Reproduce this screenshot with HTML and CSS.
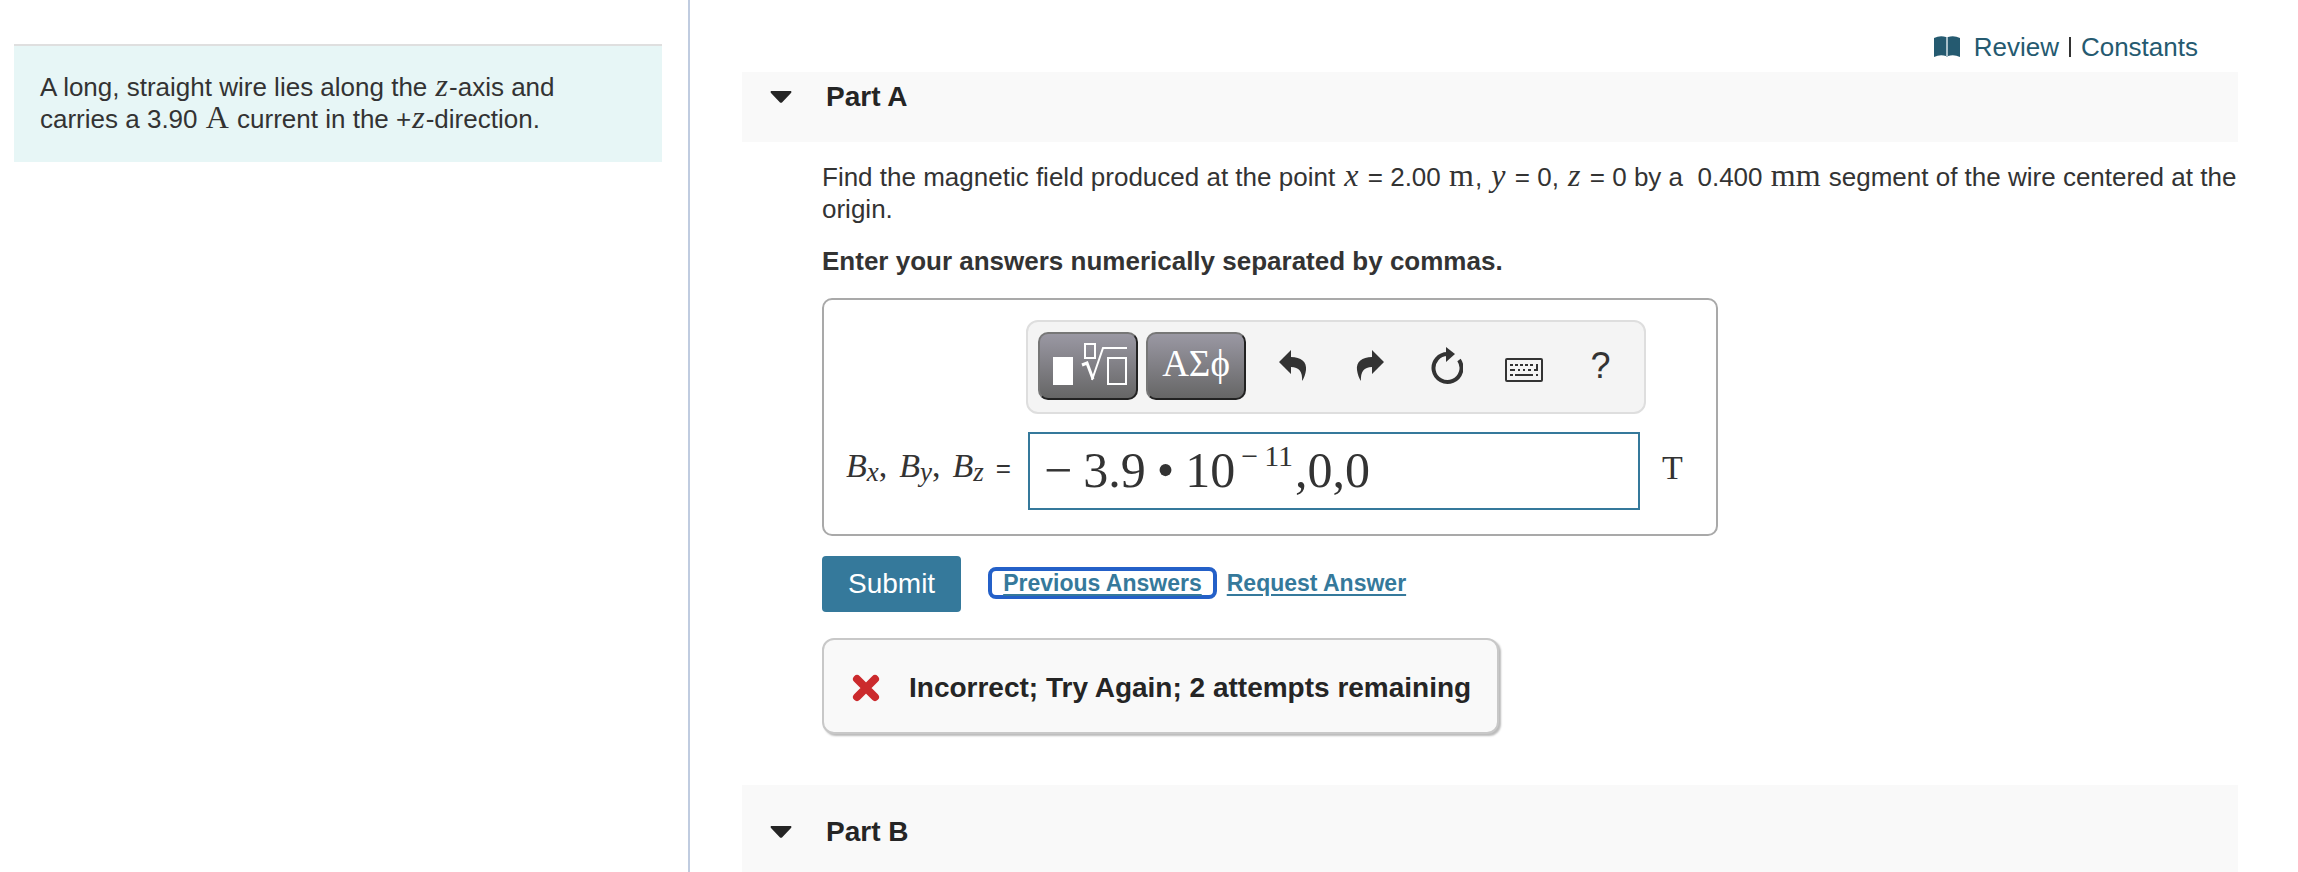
FILE: index.html
```html
<!DOCTYPE html>
<html lang="en">
<head>
    <meta charset="utf-8">
    <title>Magnetic Field of a Wire</title>
    <link rel="stylesheet" href="styles.css">
</head>
<body>
    <div class="page">
        <aside class="sidebar">
            <div class="problem-intro">
                A long, straight wire lies along the <i class="math">z</i>-axis and carries a 3.90 <span class="math">A</span> current in the +<i class="math">z</i>-direction.
            </div>
        </aside>

        <main class="content">
            <nav class="top-links">
                <svg class="book-icon" viewBox="0 0 26 22" aria-hidden="true">
                    <path d="M0 2Q6 -1 12 1V20Q6 18 0 21Z"/>
                    <path d="M14 1Q20 -1 26 2V21Q20 18 14 20Z"/>
                    <path class="spine" d="M12 1h2v20h-2z"/>
                </svg>
                <a href="#review">Review</a>
                <span class="bar"></span>
                <a href="#constants">Constants</a>
            </nav>

            <section>
                <h2 class="part-header">
                    <button class="part-toggle" aria-expanded="true">
                        <svg class="caret" viewBox="0 0 22 12" aria-hidden="true"><path d="M1 0H21Q22 1 21 2L12 11.500Q11 12 10 11.500L1 2Q0 1 1 0Z"/></svg>
                        Part A
                    </button>
                </h2>
                <div class="part-body">
                    <p>Find the magnetic field produced at the point <i class="math">x</i> = 2.00 <span class="math">m</span>, <i class="math">y</i> = 0, <i class="math">z</i> = 0 by a &nbsp;0.400 <span class="math">mm</span> segment of the wire centered at the origin.</p>
                    <p class="instructions">Enter your answers numerically separated by commas.</p>

                    <form class="answer-box">
                        <div class="toolbar">
                            <button type="button" class="tool-key" aria-label="Templates">
                                <svg width="80" height="44" viewBox="-4 0 80 44" aria-hidden="true">
                                    <path d="M1 15h20v28h-20z" fill="#fff"/>
                                    <path d="M33 2h10v14h-10zM56 16h18v26h-18z" fill="none" stroke="#fff" stroke-width="2"/>
                                    <path d="M30 23l5-2 6 16" fill="none" stroke="#fff" stroke-width="3"/>
                                    <path d="M40 38L51 6H75" fill="none" stroke="#fff" stroke-width="2"/>
                                </svg>
                            </button>
                            <button type="button" class="tool-key">ΑΣϕ</button>
                            <button type="button" class="tool" aria-label="Undo">
                                <svg width="28" height="32" viewBox="0 0 28 32" aria-hidden="true"><path d="M0 12L12 0V7C22 7 28 12 27 20Q26 27 23 31Q24 17 12 17V24Z"/></svg>
                            </button>
                            <button type="button" class="tool" aria-label="Redo">
                                <svg width="28" height="32" viewBox="0 0 28 32" aria-hidden="true"><path d="M28 12L16 0V7C6 7 0 12 1 20Q2 27 5 31Q4 17 16 17V24Z"/></svg>
                            </button>
                            <button type="button" class="tool" aria-label="Reset">
                                <svg width="32" height="38" viewBox="0 0 32 38" aria-hidden="true">
                                    <path d="M17 7A14 14 0 1 0 28 13" fill="none" stroke="#333" stroke-width="4"/>
                                    <path d="M15 0L24 7L15 15Z"/>
                                </svg>
                            </button>
                            <button type="button" class="tool tool-keyboard" aria-label="Keyboard shortcuts">
                                <svg width="38" height="24" viewBox="0 0 38 24" aria-hidden="true">
                                    <rect x="1" y="1" width="36" height="22" rx="1" fill="none" stroke="#333" stroke-width="2"/>
                                    <path d="M5 6h3v2h-3zM10 6h3v2h-3zM15 6h3v2h-3zM20 6h3v2h-3zM25 6h3v2h-3zM31 6h2v7h-4v-2h2zM5 11h5v2h-5zM13 11h2v2h-2zM18 11h2v2h-2zM23 11h3v2h-3zM5 16h3v2h-3zM10 16h18v2h-18zM31 16h2v2h-2z"/>
                                </svg>
                            </button>
                            <button type="button" class="tool" aria-label="Help">?</button>
                        </div>

                        <label class="answer-label" for="answer">
                            <span class="component"><i>B<sub>x</sub></i>,</span>
                            <span class="component"><i>B<sub>y</sub></i>,</span>
                            <span class="component"><i>B<sub>z</sub></i></span>
                            <span class="equals">=</span>
                        </label>
                        <div class="math-field">
                            <textarea id="answer" class="math-input"></textarea>
                            <span class="minus">−</span><span>3.9</span><span class="dot">•</span><span>10</span><sup><span class="exp-minus">−</span>11</sup><span>,0,0</span>
                        </div>
                        <span class="answer-unit">T</span>
                    </form>

                    <div class="actions">
                        <button class="submit">Submit</button>
                        <a class="action-link focused" href="#previous">Previous Answers</a>
                        <a class="action-link" href="#request">Request Answer</a>
                    </div>

                    <div class="feedback" role="status">
                        <svg class="cross" viewBox="0 0 28 28" aria-hidden="true"><path d="M5 5L23 23M23 5L5 23"/></svg>
                        Incorrect; Try Again; 2 attempts remaining
                    </div>
                </div>
            </section>

            <section>
                <h2 class="part-header part-b">
                    <button class="part-toggle" aria-expanded="true">
                        <svg class="caret" viewBox="0 0 22 12" aria-hidden="true"><path d="M1 0H21Q22 1 21 2L12 11.500Q11 12 10 11.500L1 2Q0 1 1 0Z"/></svg>
                        Part B
                    </button>
                </h2>
            </section>
        </main>
    </div>
</body>
</html>
```
FILE: styles.css
```css
* { box-sizing: border-box; }
body { margin: 0; font-family: "Liberation Sans", Arial, sans-serif; font-size: 26px; line-height: 32px; color: #333; background: #fff; }
button { font-family: inherit; color: inherit; border: none; background: none; padding: 0; cursor: pointer; }
p { margin: 0; }

.page { display: flex; min-height: 100vh; }
.sidebar { flex: 0 0 690px; padding: 44px 26px 0 14px; border-right: 2px solid #c0cce0; }
.problem-intro { padding: 25px 70px 27px 26px; border-top: 2px solid #dfdfdf; background: #e7f6f6; }
.content { flex: 1; min-width: 0; padding: 0 60px 0 52px; }

.math { padding: 0 1px; font-family: "Liberation Serif", serif; font-size: 32px; line-height: 24px; }

.top-links { display: flex; align-items: center; justify-content: flex-end; gap: 10px; height: 72px; padding: 22px 40px 0 0; line-height: 30px; }
.top-links a { color: #255a70; text-decoration: none; }
.book-icon { width: 26px; height: 22px; margin-right: 4px; fill: #255a70; }
.spine { fill: #a9c0ca; }
.bar { width: 2px; height: 20px; background: #333; }

.part-header { margin: 0; padding: 9px 28px 29px; background: #f9f9f9; }
.part-toggle { display: flex; align-items: center; gap: 34px; font-size: 28px; line-height: 32px; font-weight: bold; color: #252525; }
.caret { width: 22px; height: 12px; fill: #252525; }
.part-b { padding-top: 31px; }
.part-body { padding: 19px 0 51px 80px; }
.part-body i.math { padding: 0 2px; }
.instructions { margin-top: 20px; font-weight: bold; }

.answer-box { display: grid; grid-template-columns: 180px 1fr 54px; align-items: center; max-width: 896px; margin-top: 21px; padding: 20px 22px 24px; border: 2px solid #a9a9a9; border-radius: 10px; }
.toolbar { grid-column: 2 / 4; justify-self: start; display: flex; align-items: center; width: 620px; height: 94px; padding: 0 5px 2px 10px; border: 2px solid #dedede; border-radius: 12px; background: #f4f4f4; }
.tool-key { display: flex; align-items: center; justify-content: center; width: 100px; height: 68px; margin-right: 8px; padding-bottom: 4px; border: 2px solid; border-color: #777 #222 #222 #777; border-radius: 10px; background: linear-gradient(#9a98a3, #666); color: #fff; font-family: "Liberation Serif", serif; font-size: 37px; line-height: 40px; }
.tool { display: flex; align-items: center; justify-content: center; flex: 1; height: 68px; font-size: 36px; }
.tool svg { fill: #333; }
.tool-keyboard { padding-top: 8px; }

.answer-label { display: flex; align-items: baseline; gap: 12px; padding-top: 10px; font-family: "Liberation Serif", serif; font-size: 34px; line-height: 36px; white-space: nowrap; }
.answer-label sub { font-size: 27px; line-height: 1; vertical-align: -4px; }
.equals { font-family: "Liberation Sans", sans-serif; font-size: 26px; }
.math-field { position: relative; display: flex; align-items: baseline; height: 78px; margin: 18px 0 0 2px; padding: 8px 14px; border: 2px solid #35799b; font-family: "Liberation Serif", serif; font-size: 50px; line-height: 56px; }
.math-input { position: absolute; inset: 0; width: 100%; height: 100%; padding: 0; border: none; outline: none; resize: none; background: transparent; }
.minus { padding-right: 11px; }
.dot { padding: 0 11px; }
.math-field sup { align-self: flex-start; padding: 2px 2px 0 6px; font-size: 30px; line-height: 24px; }
.exp-minus { padding-right: 6px; }
.answer-unit { padding: 11px 0 0 22px; font-family: "Liberation Serif", serif; font-size: 34px; }

.actions { display: flex; align-items: center; margin-top: 20px; }
.submit { height: 56px; padding: 0 26px; margin-right: 27px; border-radius: 4px; background: #35799b; color: #fff; font-size: 28px; }
.action-link { margin-bottom: 3px; padding: 0 10px; font-size: 23px; line-height: 24px; font-weight: bold; color: #35799b; text-underline-offset: 3px; text-decoration-thickness: 2px; }
.focused { padding: 0 11px; border: 4px solid #2460c8; border-radius: 8px; }

.feedback { display: flex; align-items: center; gap: 29px; width: fit-content; height: 96px; margin-top: 26px; padding: 4px 26px 0 28px; border: 2px solid #c8c8c8; border-radius: 12px; background: #f9f9f9; box-shadow: 2px 2px 2px #bbb; font-size: 28px; font-weight: bold; color: #252525; }
.cross { width: 28px; height: 28px; fill: none; stroke: #cb2a2d; stroke-width: 8; stroke-linecap: round; }
```
